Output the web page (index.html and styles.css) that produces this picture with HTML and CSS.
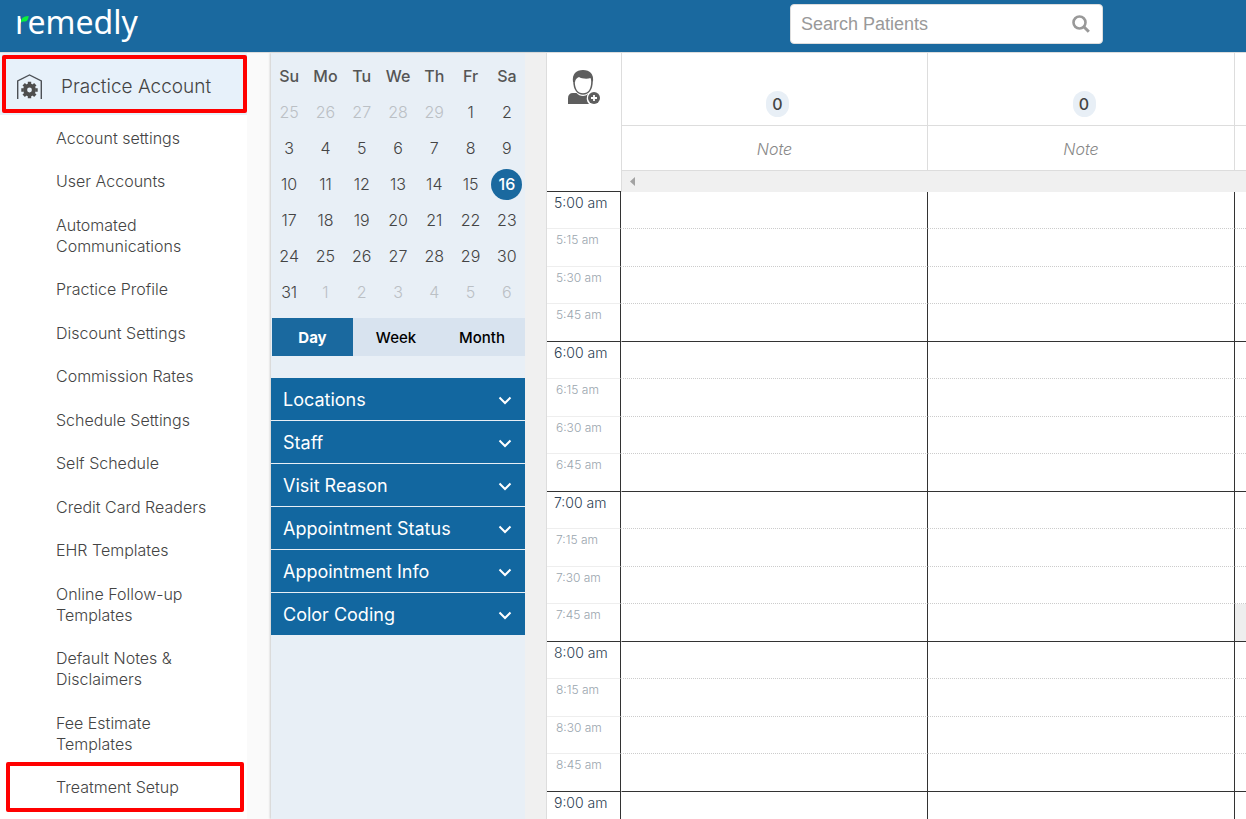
FILE: index.html
```html
<!DOCTYPE html>
<html lang="en">
<head>
    <meta charset="UTF-8">
    <meta name="viewport" content="width=device-width, initial-scale=1.0">
    <title>remedly</title>
    <link rel="stylesheet" href="styles.css">
</head>
<body>

    <header class="topbar">
        <a class="logo" href="#">remedly
            <svg class="leaf" width="8" height="10" viewBox="0 0 8 10">
                <rect width="7" height="10" fill="#1a699f"/>
                <path d="M0 8.500C0 4.500 2 2.300 7.500 2C7.500 5.500 6 7.800 3 7.600C1.600 7.500 0.800 7.800 0 8.500Z" fill="#0cf03c"/>
            </svg>
        </a>
        <form class="search">
            <input type="text" placeholder="Search Patients" aria-label="Search Patients">
            <button type="button" aria-label="Search">
                <svg width="18" height="18" viewBox="0 0 18 18" fill="none" stroke="#999" stroke-width="2.600"><circle cx="7.500" cy="7.500" r="6"/><path d="M11.800 11.800L16.800 16.800" stroke-width="3"/></svg>
            </button>
        </form>
    </header>

    <div class="main">
        <nav class="sidebar">
            <a class="account highlight" href="#">
                <svg width="26" height="26" viewBox="0 0 26 26">
                    <path d="M0.700 25V7L12.500 1L24.300 7V25" fill="none" stroke="#4d5156" stroke-width="1.400"/>
                    <circle cx="12.500" cy="16" r="4.400" fill="none" stroke="#4d4d4d" stroke-width="4"/>
                    <path d="M12.500 7.800V10M12.500 22V24.200M4.300 16H6.500M18.500 16H20.700M6.700 10.200L8.500 12M16.500 20L18.300 21.800M18.300 10.200L16.500 12M8.500 20L6.700 21.800" stroke="#4d4d4d" stroke-width="3.400"/>
                </svg>
                Practice Account
            </a>
            <ul class="menu">
                <li><a href="#">Account settings</a></li>
                <li><a href="#">User Accounts</a></li>
                <li><a href="#">Automated<br>Communications</a></li>
                <li><a href="#">Practice Profile</a></li>
                <li><a href="#">Discount Settings</a></li>
                <li><a href="#">Commission Rates</a></li>
                <li><a href="#">Schedule Settings</a></li>
                <li><a href="#">Self Schedule</a></li>
                <li><a href="#">Credit Card Readers</a></li>
                <li><a href="#">EHR Templates</a></li>
                <li><a href="#">Online Follow-up<br>Templates</a></li>
                <li><a href="#">Default Notes &amp;<br>Disclaimers</a></li>
                <li><a href="#">Fee Estimate<br>Templates</a></li>
                <li class="highlight"><a href="#">Treatment Setup</a></li>
            </ul>
        </nav>

        <aside class="panel">
            <table class="calendar">
                <thead>
                    <tr><th>Su</th><th>Mo</th><th>Tu</th><th>We</th><th>Th</th><th>Fr</th><th>Sa</th></tr>
                </thead>
                <tbody id="days"></tbody>
            </table>
            <div class="views">
                <button class="active">Day</button>
                <button>Week</button>
                <button>Month</button>
            </div>
            <div class="filters">
                <button>Locations <svg class="chevron" viewBox="0 0 14 9"><path d="M1.500 1.500L7 7L12.500 1.500"/></svg></button>
                <button>Staff <svg class="chevron" viewBox="0 0 14 9"><path d="M1.500 1.500L7 7L12.500 1.500"/></svg></button>
                <button>Visit Reason <svg class="chevron" viewBox="0 0 14 9"><path d="M1.500 1.500L7 7L12.500 1.500"/></svg></button>
                <button>Appointment Status <svg class="chevron" viewBox="0 0 14 9"><path d="M1.500 1.500L7 7L12.500 1.500"/></svg></button>
                <button>Appointment Info <svg class="chevron" viewBox="0 0 14 9"><path d="M1.500 1.500L7 7L12.500 1.500"/></svg></button>
                <button>Color Coding <svg class="chevron" viewBox="0 0 14 9"><path d="M1.500 1.500L7 7L12.500 1.500"/></svg></button>
            </div>
        </aside>

        <section class="schedule">
            <table class="slots">
                <colgroup><col class="time-col"><col class="room-col"><col class="room-col"><col class="room-col"></colgroup>
                <thead>
                    <tr class="counts">
                        <th class="corner" rowspan="3">
                            <button aria-label="Add patient">
                                <svg width="33" height="35" viewBox="0 0 33 35">
                                    <path d="M0 34V28.500Q0 23 5 23H8.500Q11 26 15 26Q18 26 20 24Q18.500 26 18.700 29Q19 32 21 34Z" fill="#5e5e5e"/>
                                    <path d="M6 11C6 20 10 24 15 24C20 24 24 20 24 11C24 4 20 1.500 15 1.500C10 1.500 6 4 6 11Z" fill="#fff" stroke="#5e5e5e" stroke-width="1.600"/>
                                    <path d="M5 12C4 4 8 0 15 0C22 0 26 4 25 12L22.500 8C19 9.500 13 8.500 11 7C9 8 7.500 9 7 12Z" fill="#5e5e5e"/>
                                    <circle cx="26" cy="28" r="7" fill="#fff"/>
                                    <circle cx="26" cy="28" r="6" fill="#5e5e5e"/>
                                    <path d="M26 25V31M23 28H29" stroke="#fff" stroke-width="1.800"/>
                                </svg>
                            </button>
                        </th>
                        <th><span class="count">0</span></th>
                        <th><span class="count">0</span></th>
                        <th></th>
                    </tr>
                    <tr class="notes">
                        <td>Note</td>
                        <td>Note</td>
                        <td></td>
                    </tr>
                    <tr class="scroller">
                        <td colspan="3">
                            <button aria-label="Scroll left"><svg width="5" height="9" viewBox="0 0 5 9"><path d="M5 0V9L0 4.500Z" fill="#a3a3a3"/></svg></button>
                        </td>
                    </tr>
                </thead>
                <tbody id="slots"></tbody>
            </table>
        </section>
    </div>

    <script>
        // Calendar: starts on the 25th of a 29 day month, 16th is selected
        let days = document.getElementById('days');
        let day = 25;
        let month = 0;
        const lengths = [29, 31, 30];

        for (let week = 0; week < 6; week++) {
            let row = days.insertRow();
            for (let i = 0; i < 7; i++) {
                let button = document.createElement('button');
                button.textContent = day;
                if (month !== 1) {
                    button.className = 'other';
                } else if (day === 16) {
                    button.className = 'selected';
                }
                row.insertCell().appendChild(button);
                day++;
                if (day > lengths[month]) {
                    day = 1;
                    month++;
                }
            }
        }

        // Quarter hour rows, 5:00 to 9:00
        let slots = document.getElementById('slots');
        const quarters = ['00', '15', '30', '45'];

        for (let i = 0; i <= 16; i++) {
            let hour = 5 + Math.floor(i / 4);
            let minute = quarters[i % 4];
            let row = slots.insertRow();
            let time = document.createElement('th');
            time.textContent = hour + ':' + minute + ' am';
            if (minute === '00') time.className = 'hour';
            if (minute === '45') row.className = 'last';
            row.appendChild(time);
            for (let room = 0; room < 3; room++) {
                let cell = row.insertCell();
                if (room === 2 && hour === 7 && minute === '45') {
                    cell.className = 'blocked';
                }
            }
        }
    </script>

</body>
</html>
```

FILE: styles.css
```css
* {
    box-sizing: border-box;
}
body {
    margin: 0;
    height: 100vh;
    display: flex;
    flex-direction: column;
    overflow: hidden;
    font-family: Inter, "Liberation Sans", sans-serif;
    font-weight: 300;
    font-size: 16px;
    color: #444;
    background-color: #fff;
}
a {
    color: inherit;
    text-decoration: none;
}
button {
    font: inherit;
    color: inherit;
    border: none;
    background: none;
    padding: 0;
    cursor: pointer;
}
svg {
    display: block;
}

/* Top bar */
.topbar {
    flex: none;
    display: flex;
    justify-content: space-between;
    align-items: flex-start;
    height: 53px;
    padding: 0 143px 0 15px;
    background-color: #1a699f;
    border-bottom: 1px solid #ddd;
}
.logo {
    position: relative;
    font-family: "Noto Sans", "Open Sans", sans-serif;
    font-weight: 400;
    font-size: 32px;
    line-height: 44px;
    color: #fff;
}
.leaf {
    position: absolute;
    left: 6px;
    top: 14px;
}
.search {
    display: flex;
    align-items: center;
    width: 313px;
    height: 40px;
    margin-top: 4px;
    padding: 0 12px 0 10px;
    background-color: #fff;
    border: 1px solid #ddd;
    border-radius: 4px;
}
.search input {
    flex: 1;
    min-width: 0;
    border: none;
    outline: none;
    padding: 0;
    font-family: "Liberation Sans", sans-serif;
    font-size: 18px;
    color: #444;
}
.search input::placeholder {
    color: #999;
}

.main {
    flex: 1;
    min-height: 0;
    display: flex;
}

/* Settings menu */
.sidebar {
    flex: none;
    width: 271px;
    background-color: #fff;
    border-right: 24px solid #fafafa;
}
.account {
    display: flex;
    align-items: center;
    gap: 18px;
    height: 62px;
    padding: 5px 0 0 17px;
    font-size: 19px;
    background-color: #e7f1fa;
}
.highlight {
    position: relative;
}
.highlight::after {
    content: "";
    position: absolute;
    inset: 2px 0 2px 2px;
    border: 4px solid #f00;
    border-radius: 2px;
}
.menu {
    list-style: none;
    margin: 0;
    padding: 2px 0 0;
}
.menu li {
    padding: 11px 0 11px 56px;
    line-height: 21px;
}
.menu li:nth-child(even) {
    padding-bottom: 12px;
}
.menu .highlight::after {
    inset: -4px 3px -2px 6px;
}

/* Calendar panel */
.panel {
    flex: none;
    width: 275px;
    padding-top: 5px;
    background-color: #e8eff6;
    border-right: 21px solid #f0f0f0;
    box-shadow: -1px 0 2px #ccc;
}
.calendar {
    width: 100%;
    table-layout: fixed;
    border-collapse: collapse;
    text-align: center;
}
.calendar th,
.calendar td {
    height: 36px;
    padding: 0;
}
.calendar th {
    font-weight: 500;
    color: #555;
}
.calendar button {
    width: 31px;
    height: 31px;
    border-radius: 50%;
}
.calendar .other {
    color: #bbc0c5;
}
.calendar .selected {
    background-color: #1a699f;
    color: #fff;
    font-weight: 500;
}
.views {
    display: flex;
    margin: 8px 0 22px 1px;
    background-color: #d8e3ef;
}
.views button {
    flex: 1;
    height: 38px;
    font-weight: 500;
    font-size: 15px;
    color: #000;
}
.views .active {
    flex: 0 0 81px;
    background-color: #1a699f;
    color: #fff;
    font-weight: 700;
}
.filters button {
    display: flex;
    justify-content: space-between;
    align-items: center;
    width: 100%;
    height: 43px;
    padding: 0 13px 0 12px;
    background-color: #1267a0;
    border-bottom: 1px solid #e8eff6;
    font-weight: 400;
    font-size: 18px;
    color: #fff;
}
.filters button:last-child {
    height: 42px;
    border-bottom: none;
}
.chevron {
    width: 14px;
    height: 9px;
    margin-top: 2px;
    fill: none;
    stroke: #fff;
    stroke-width: 2;
}

/* Schedule */
.schedule {
    flex: 1;
    min-width: 0;
    overflow: hidden;
    border-left: 1px solid #ddd;
}
.slots {
    table-layout: fixed;
    width: 995px;
    border-spacing: 0;
    text-align: center;
}
.time-col {
    width: 74px;
}
.room-col {
    width: 307px;
}
.slots th,
.slots td {
    padding: 0;
}
.slots .corner {
    vertical-align: top;
    padding-top: 17px;
    border-bottom: 1px solid #333;
}
.counts th,
.notes td {
    border-right: 1px solid #ddd;
    border-bottom: 1px solid #ddd;
}
.slots .corner {
    border-right: none;
}
.corner + th,
.notes td:first-child,
.scroller td {
    border-left: 1px solid #ddd;
}
.counts {
    height: 73px;
}
.counts th {
    vertical-align: bottom;
}
.count {
    display: inline-block;
    width: 23px;
    margin: 0 0 8px 6px;
    border-radius: 12px;
    background-color: #e8eff6;
    font-weight: 500;
    font-size: 16px;
    line-height: 26px;
}
.notes {
    height: 45px;
    font-size: 16px;
    font-style: italic;
    color: #888;
}
.slots .notes td {
    padding-top: 2px;
}
.scroller {
    height: 21px;
}
.slots .scroller td {
    padding: 6px 0 0 8px;
    vertical-align: top;
    line-height: 9px;
    background-color: #f0f0f0;
    text-align: left;
}
.scroller button {
    display: block;
}
.slots tbody tr {
    height: 37px;
}
.slots tbody tr:nth-child(even) {
    height: 38px;
}
.slots tbody th {
    vertical-align: top;
    padding: 4px 0 0 9px;
    border-right: 1px solid #333;
    border-bottom: 1px solid #eee;
    text-align: left;
    font-weight: 300;
    font-size: 12px;
    line-height: 14px;
    color: #9aa5ae;
}
.slots tbody .hour {
    padding-left: 7px;
    font-size: 14px;
    color: #2c4053;
}
.slots tbody td {
    border-right: 1px solid #333;
    border-bottom: 1px dotted #ccc;
}
.slots tbody td:nth-child(2) {
    border-left: 1px solid #fff;
}
.slots tbody .last th,
.slots tbody .last td {
    border-bottom: 1px solid #333;
}
.blocked {
    background-color: #eee;
}
```
